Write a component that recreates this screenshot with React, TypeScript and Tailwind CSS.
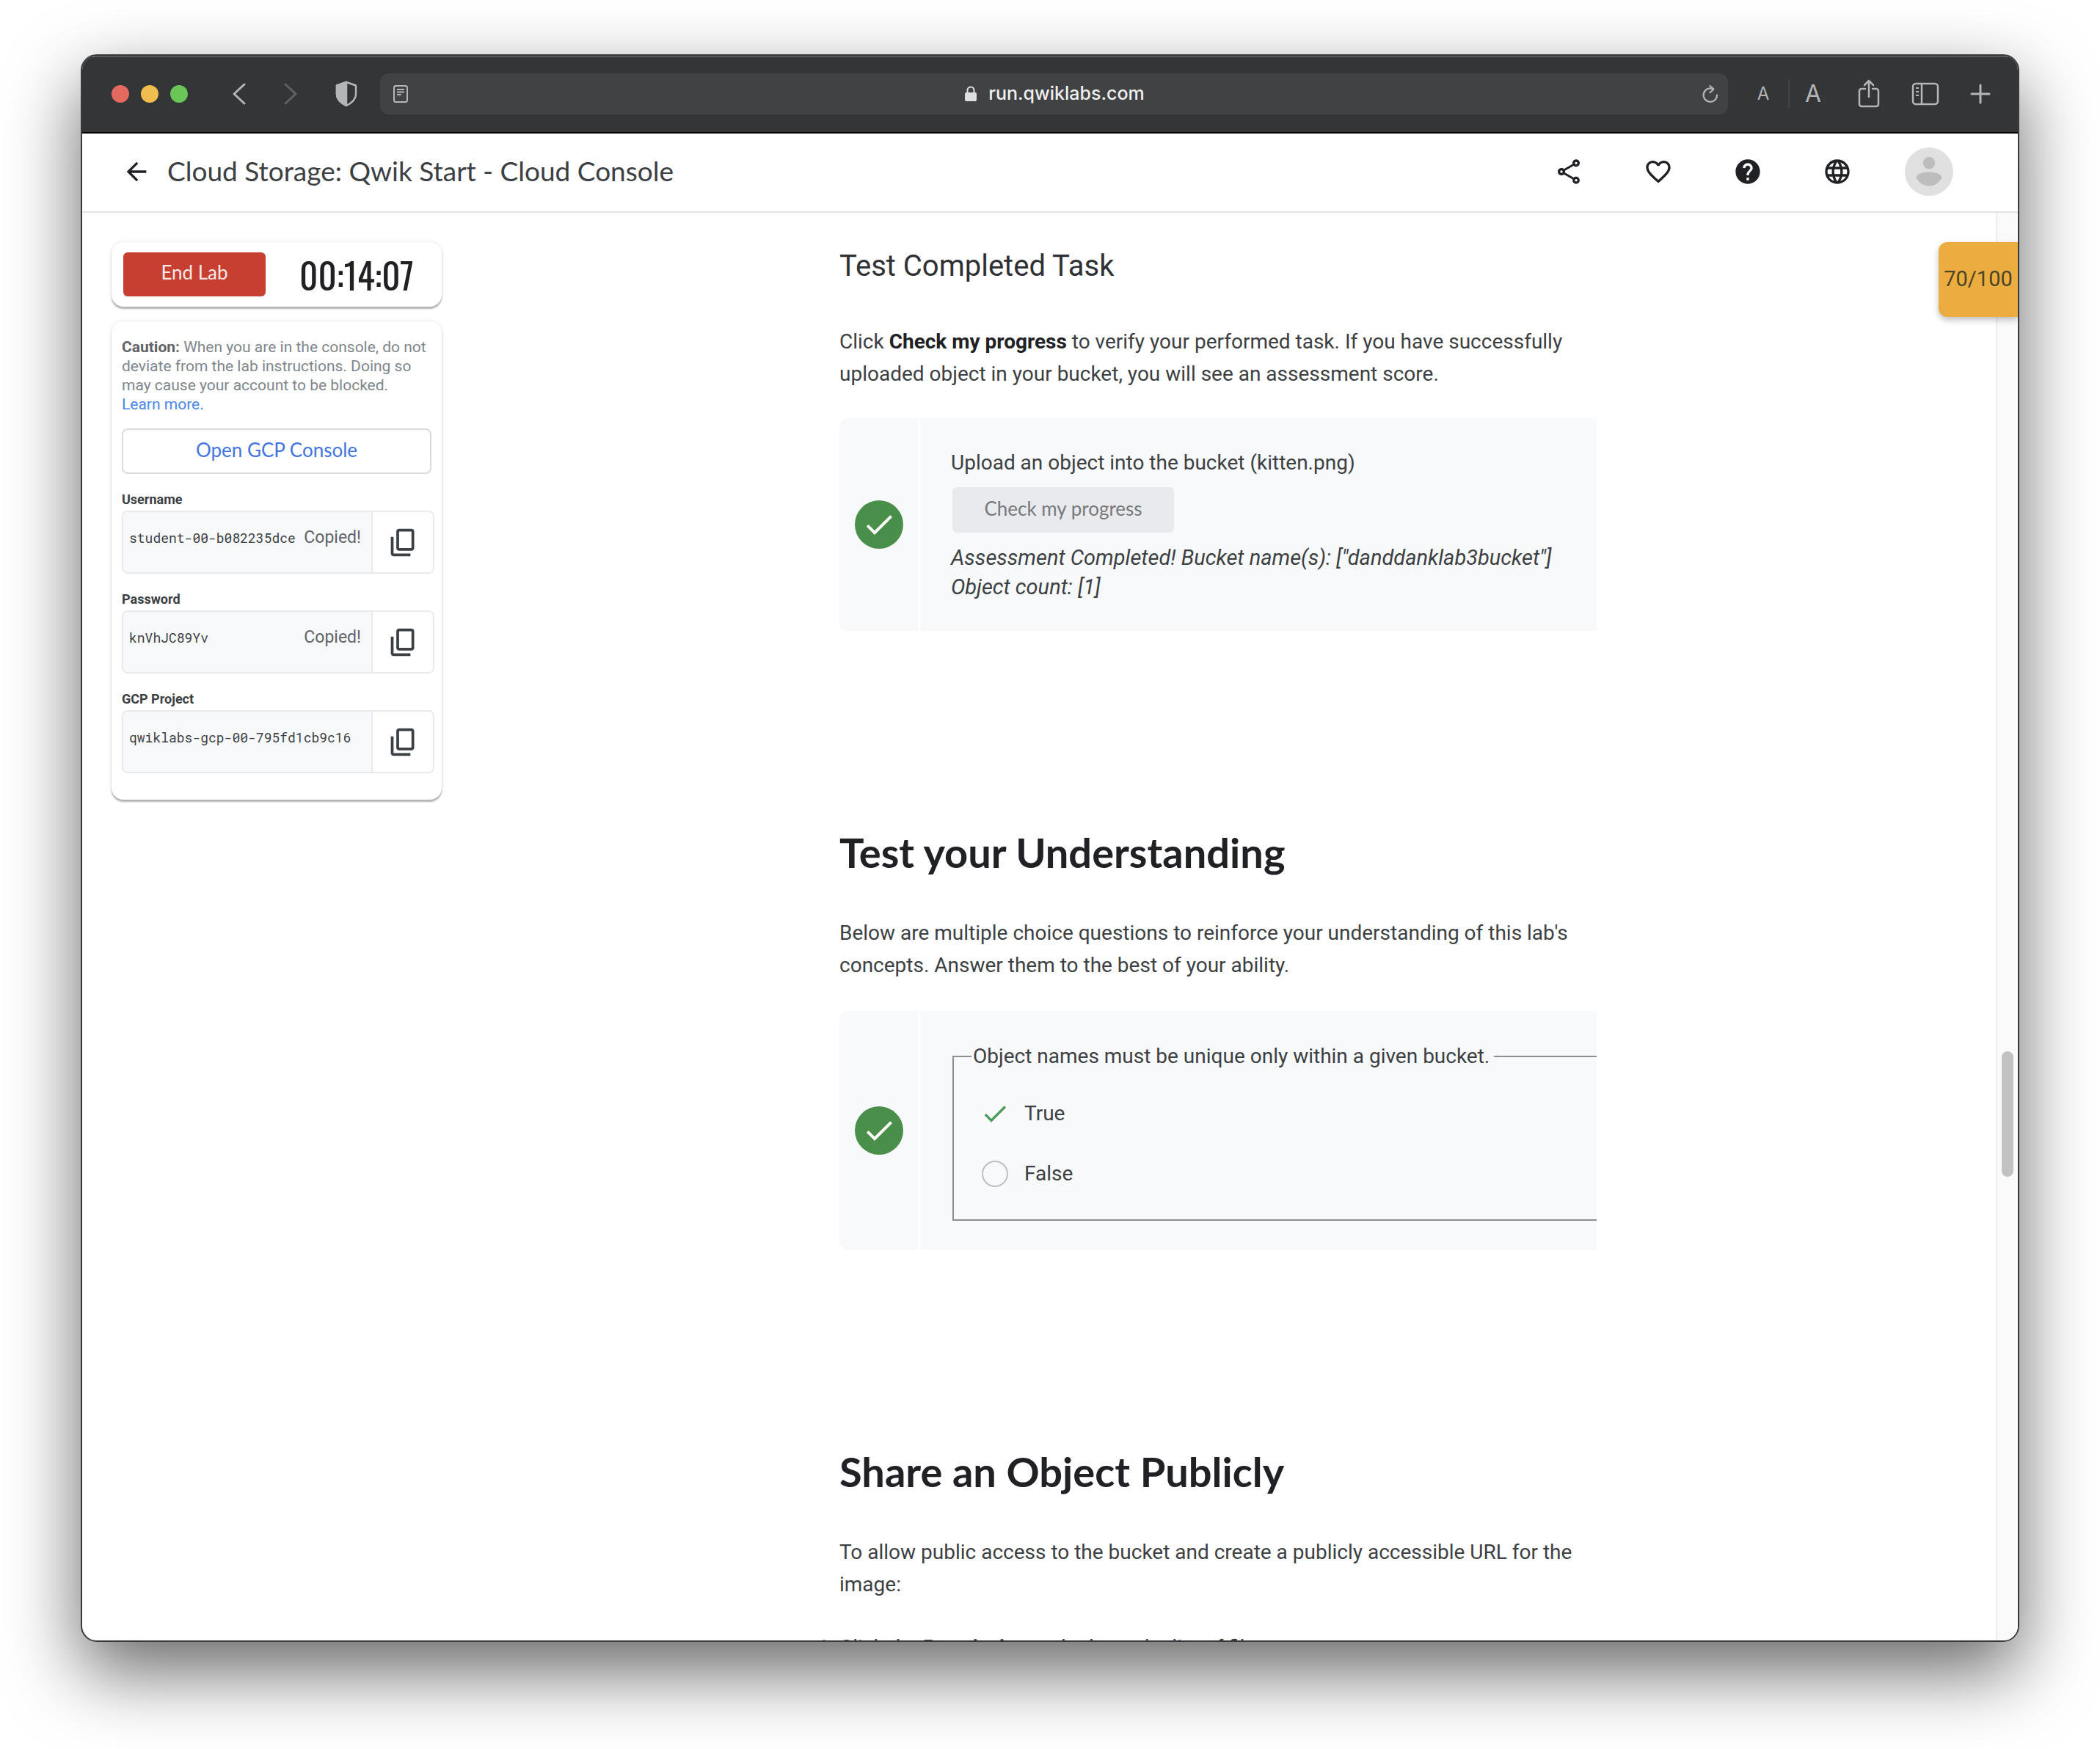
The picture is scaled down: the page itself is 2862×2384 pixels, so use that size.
import type { ReactNode } from "react";
import { MdArrowBack, MdOutlineShare, MdFavoriteBorder, MdHelp, MdLanguage, MdCheck } from "react-icons/md";

const brand = "font-['Google_Sans','Lato',sans-serif]";

function ToolButton({ label, className, children }: { label: string; className: string; children: ReactNode }) {
  return (
    <button type="button" aria-label={label} className={`flex shrink-0 items-center justify-center ${className}`}>
      {children}
    </button>
  );
}

function TitleBar() {
  return (
    <div className="flex h-[106px] shrink-0 items-center border-t-2 border-b-2 border-t-[#58595a] border-b-black bg-[#343537] pr-[37px] pb-0.5 pl-10 text-[#b4b5b7]">
      <div className="flex shrink-0 gap-4">
        <span className="size-6 rounded-full bg-[#e4695e]" />
        <span className="size-6 rounded-full bg-[#f0bd4f]" />
        <span className="size-6 rounded-full bg-[#69c657]" />
      </div>
      <ToolButton label="Back" className="ml-[60px] h-8 w-5">
        <svg viewBox="0 0 20 32" className="h-8 w-5" fill="none" stroke="currentColor" strokeWidth="3" strokeLinecap="round" strokeLinejoin="round">
          <path d="M17 3 3 16l14 13" />
        </svg>
      </ToolButton>
      <ToolButton label="Forward" className="ml-[50px] h-8 w-5 text-[#606163]">
        <svg viewBox="0 0 20 32" className="h-8 w-5" fill="none" stroke="currentColor" strokeWidth="3" strokeLinecap="round" strokeLinejoin="round">
          <path d="M3 3l14 13L3 29" />
        </svg>
      </ToolButton>
      <ToolButton label="Privacy report" className="ml-[50px] h-9 w-8">
        <svg viewBox="0 0 32 36" className="h-9 w-8" fill="none" stroke="currentColor" strokeWidth="2.5" strokeLinejoin="round">
          <path d="M16 2 29 6.500v12c0 7-6 12-13 15.500C9 30.500 3 25.500 3 18.500v-12z" />
          <path d="M16 2v32C9 30.500 3 25.500 3 18.500v-12z" fill="currentColor" />
        </svg>
      </ToolButton>
      <div className="ml-[30px] flex h-14 min-w-0 flex-1 items-center rounded-xl bg-[#414244] pr-3 pl-[18px]">
        <ToolButton label="Show reader" className="h-6 w-5">
          <svg viewBox="0 0 20 24" className="h-6 w-5" fill="none" stroke="currentColor" strokeWidth="2">
            <rect x="1" y="1" width="18" height="22" rx="2.500" />
            <path d="M5 6h10M5 9.500h10M5 13h6" strokeWidth="1.800" />
          </svg>
        </ToolButton>
        <div className="flex min-w-0 flex-1 items-center justify-center gap-4">
          <svg viewBox="0 0 16 22" className="h-[22px] w-4 shrink-0 text-[#dedfe0]">
            <rect x="0" y="9" width="16" height="12" rx="2" fill="currentColor" />
            <path d="M3.500 10V6a4.500 4.500 0 0 1 9 0v4" fill="none" stroke="currentColor" strokeWidth="2" />
          </svg>
          <input
            aria-label="Address"
            readOnly
            value="run.qwiklabs.com"
            className="bg-transparent font-['Inter',sans-serif] text-[25px] font-medium text-[#f0f0f1] outline-none [field-sizing:content]"
          />
        </div>
        <ToolButton label="Reload" className="h-7 w-6">
          <svg viewBox="0 0 24 28" className="h-7 w-6" fill="none" stroke="currentColor" strokeWidth="2.200" strokeLinecap="round" strokeLinejoin="round">
            <path d="M21 15.500A9.200 9.200 0 1 1 15.500 7.200" />
            <path d="M11.500 3l5 4.500-5 4.800" />
          </svg>
        </ToolButton>
      </div>
      <ToolButton label="Smaller text" className="ml-9 w-6 font-['Inter',sans-serif] text-[24px] leading-10">A</ToolButton>
      <span className="ml-[22px] h-10 w-0.5 shrink-0 bg-[#414244]" />
      <ToolButton label="Larger text" className="ml-5 w-6 font-['Inter',sans-serif] text-[32px] leading-10">A</ToolButton>
      <ToolButton label="Share page" className="ml-12 h-10 w-8">
        <svg viewBox="0 0 32 40" className="h-10 w-8" fill="none" stroke="currentColor" strokeWidth="2.500" strokeLinecap="round" strokeLinejoin="round">
          <path d="M11 13H6a3 3 0 0 0-3 3v18a3 3 0 0 0 3 3h20a3 3 0 0 0 3-3V16a3 3 0 0 0-3-3h-5" />
          <path d="M16 24V2M10 8l6-6 6 6" />
        </svg>
      </ToolButton>
      <ToolButton label="Show sidebar" className="ml-[42px] h-8 w-[38px]">
        <svg viewBox="0 0 38 32" className="h-8 w-[38px]" fill="none" stroke="currentColor" strokeWidth="2.500">
          <rect x="2" y="2" width="34" height="28" rx="4" />
          <path d="M14 2v28" />
          <path d="M6 8h4M6 13h4M6 18h4" strokeWidth="2" />
        </svg>
      </ToolButton>
      <ToolButton label="New tab" className="ml-[42px] size-7">
        <svg viewBox="0 0 28 28" className="size-7" fill="none" stroke="currentColor" strokeWidth="3" strokeLinecap="round">
          <path d="M14 2v24M2 14h24" />
        </svg>
      </ToolButton>
    </div>
  );
}

function PageHeader() {
  return (
    <header className="flex h-[108px] shrink-0 items-center border-b-2 border-[#e2e3e3] bg-white pr-[88px] pb-0.5 pl-[54px] text-[#202124]">
      <ToolButton label="Back to catalog" className="size-10">
        <MdArrowBack className="size-10" />
      </ToolButton>
      <h1 className={`ml-[22px] flex-1 pb-0.5 text-[37px] text-[#3c4043] ${brand}`}>Cloud Storage: Qwik Start - Cloud Console</h1>
      <div className="flex items-center gap-[82px]">
        <ToolButton label="Share" className="size-10">
          <MdOutlineShare className="size-10" />
        </ToolButton>
        <ToolButton label="Favorite" className="size-10">
          <MdFavoriteBorder className="size-10" />
        </ToolButton>
        <ToolButton label="Help" className="size-10">
          <MdHelp className="size-10" />
        </ToolButton>
        <ToolButton label="Language" className="size-10">
          <MdLanguage className="size-10" />
        </ToolButton>
      </div>
      <ToolButton label="Account" className="ml-[72px] size-[66px]">
        <svg viewBox="0 0 68 68" className="size-[66px]">
          <circle cx="34" cy="34" r="34" fill="#e0e0e0" />
          <circle cx="34" cy="22" r="8.500" fill="#bdbdbd" />
          <path d="M16 43c0-6 9-8.500 18-8.500S52 37 52 43c-4 6.500-10 11-18 11s-14-4.500-18-11z" fill="#bdbdbd" />
        </svg>
      </ToolButton>
    </header>
  );
}

function Credential({ id, label, value, copied }: { id: string; label: string; value: string; copied: boolean }) {
  return (
    <div className="mt-6 -mr-1">
      <label htmlFor={id} className="block text-[18px] leading-[22px] font-bold text-[#3c4043]">
        {label}
      </label>
      <div className="mt-1 flex h-[86px] overflow-hidden rounded-lg border-2 border-[#e8eaed]">
        <div className="flex min-w-0 flex-1 items-center bg-[#f8f9fb] pr-3.5 pb-3 pl-2">
          <input
            id={id}
            readOnly
            value={value}
            className="min-w-0 flex-1 bg-transparent font-['Roboto_Mono','Liberation_Mono',monospace] text-[18px] text-[#3c4043] outline-none"
          />
          {copied && <span className="text-[23px] text-[#5f6368]">Copied!</span>}
        </div>
        <button type="button" aria-label={`Copy ${label}`} className="flex w-[84px] shrink-0 items-center justify-center border-l-2 border-[#e8eaed] bg-white">
          <svg viewBox="0 -960 960 960" className="size-[45px]" fill="#3c4043">
            <path d="M360-240q-33 0-56.500-23.500T280-320v-480q0-33 23.500-56.500T360-880h360q33 0 56.500 23.500T800-800v480q0 33-23.500 56.500T720-240H360Zm0-80h360v-480H360v480ZM200-80q-33 0-56.500-23.500T120-160v-485h80v485h490v80H200Z" />
          </svg>
        </button>
      </div>
    </div>
  );
}

const card = "rounded-2xl bg-white shadow-[0_3px_2px_rgba(0,0,0,0.28),0_0_6px_rgba(0,0,0,0.1)]";

function LabPanel() {
  return (
    <aside className="w-[490px] shrink-0 pt-10 pl-10">
      <div className={`flex h-[88px] items-center pl-4 ${card}`}>
        <button type="button" className={`h-[60px] w-[194px] rounded-md bg-[#c73f31] pb-1.5 text-[26px] text-[#fbe9e7] ${brand}`}>
          End Lab
        </button>
        <span className="flex-1 pl-2 text-center font-['Oswald','Liberation_Sans_Narrow','Roboto_Condensed','Roboto',sans-serif] text-[49px] leading-none text-[#202124]">
          00:14:07
        </span>
      </div>
      <div className={`mt-5 px-3.5 pt-[22px] pb-9 ${card}`}>
        <p className="text-[21px] leading-[26px] text-[#80868b]">
          <b className="text-[#5f6368]">Caution:</b> When you are in the console, do not deviate from the lab instructions. Doing so may cause your account to be blocked.
          <br />
          <a href="#learn" className="text-[#4a86e8]">
            Learn more.
          </a>
        </p>
        <button type="button" className={`mt-5 h-[62px] w-full rounded-lg border-2 border-[#dadce0] bg-white pb-1 text-[26px] text-[#4374e0] ${brand}`}>
          Open GCP Console
        </button>
        <Credential id="username" label="Username" value="student-00-b082235dce" copied />
        <Credential id="password" label="Password" value="knVhJC89Yv" copied />
        <Credential id="project" label="GCP Project" value="qwiklabs-gcp-00-795fd1cb9c16" copied={false} />
      </div>
    </aside>
  );
}

function ResultPanel({ children, className }: { children: ReactNode; className: string }) {
  return (
    <div className={`flex overflow-hidden rounded-l-xl bg-[#f8f9fb] ${className}`}>
      <div className="flex w-[110px] shrink-0 items-center justify-center border-r-2 border-white">
        <span className="flex size-[66px] items-center justify-center rounded-full bg-[#4a8f49] text-white">
          <MdCheck className="size-12" />
        </span>
      </div>
      <div className="min-w-0 flex-1 pl-[42px]">{children}</div>
    </div>
  );
}

const paragraph = "text-[28px] leading-[44px]";
const sectionTitle = `text-[56px] leading-[64px] font-bold text-[#202124] ${brand}`;

function Instructions() {
  return (
    <main className="min-w-0 flex-1 pt-10 pr-0.5">
      <div className="mx-auto max-w-[1032px]">
        <h3 className="text-[40px] leading-[66px] text-[#303134]">Test Completed Task</h3>
        <p className={`mt-12 ${paragraph}`}>
          Click <b className="text-[#202124]">Check my progress</b> to verify your performed task. If you have successfully uploaded object in your bucket, you will see an assessment score.
        </p>
        <ResultPanel className="mt-[38px] h-[290px]">
          <p className="mt-10 text-[28px] leading-[42px]">Upload an object into the bucket (kitten.png)</p>
          <button type="button" disabled className={`mt-3 ml-0.5 block h-[62px] w-[302px] rounded-md bg-[#e8eaed] pb-1 text-[26px] text-[#77797c] ${brand}`}>
            Check my progress
          </button>
          <p className="mt-3.5 text-[29px] leading-10 italic">
            Assessment Completed! Bucket name(s): ["danddanklab3bucket"]
            <br />
            Object count: [1]
          </p>
        </ResultPanel>

        <h2 className={`mt-[270px] ${sectionTitle}`}>Test your Understanding</h2>
        <p className={`mt-14 ${paragraph}`}>Below are multiple choice questions to reinforce your understanding of this lab's concepts. Answer them to the best of your ability.</p>
        <ResultPanel className="mt-10 h-[326px]">
          <fieldset className="mt-[42px] ml-0.5 h-[244px] w-[1032px] border-2 border-[#8b8f90] pl-6">
            <legend className="pr-1.5 pl-0.5 text-[28px] leading-10">Object names must be unique only within a given bucket.</legend>
            <label className="mt-[38px] flex items-center gap-[22px] pl-3.5 text-[28px] leading-10">
              <input type="radio" name="unique" defaultChecked className="peer sr-only" />
              <MdCheck className="-mx-0.5 size-10 text-[#4a9c5a]" />
              True
            </label>
            <label className="mt-[42px] flex items-center gap-[22px] pl-3.5 text-[28px] leading-10">
              <input type="radio" name="unique" className="size-9 appearance-none rounded-full border-2 border-[#bdc1c6]" />
              False
            </label>
          </fieldset>
        </ResultPanel>

        <h2 className={`mt-[270px] ${sectionTitle}`}>Share an Object Publicly</h2>
        <p className={`mt-14 ${paragraph}`}>To allow public access to the bucket and create a publicly accessible URL for the image:</p>
        <ol className={`mt-[42px] list-decimal ${paragraph}`}>
          <li>
            Click the <b>Permissions</b> tab above the list of files.
          </li>
        </ol>
      </div>
    </main>
  );
}

export default function App() {
  return (
    <div className="flex h-screen flex-col overflow-hidden bg-white px-[110px] pt-[74px] pb-[146px] font-['Roboto',sans-serif] text-[#3c4043]">
      <div className="flex min-h-0 flex-1 flex-col overflow-hidden rounded-[22px] border-2 border-[#38393b] bg-white shadow-[0_40px_100px_rgba(0,0,0,0.6)]">
        <TitleBar />
        <PageHeader />
        <div className="relative flex min-h-0 flex-1 overflow-hidden">
          <LabPanel />
          <Instructions />
          <div className="w-[30px] shrink-0 border-l-2 border-[#ececec] bg-[#fafafa] px-1.5">
            <div className="mt-[1143px] h-[171px] w-4 rounded-full bg-[#c2c2c2]" />
          </div>
          <div className="absolute top-10 right-0 flex h-[102px] w-[108px] items-center justify-center rounded-l-xl bg-[#ebad3f] text-[29px] text-[#4d4327] shadow-[0_4px_8px_rgba(0,0,0,0.25)]">
            70/100
          </div>
        </div>
      </div>
    </div>
  );
}
